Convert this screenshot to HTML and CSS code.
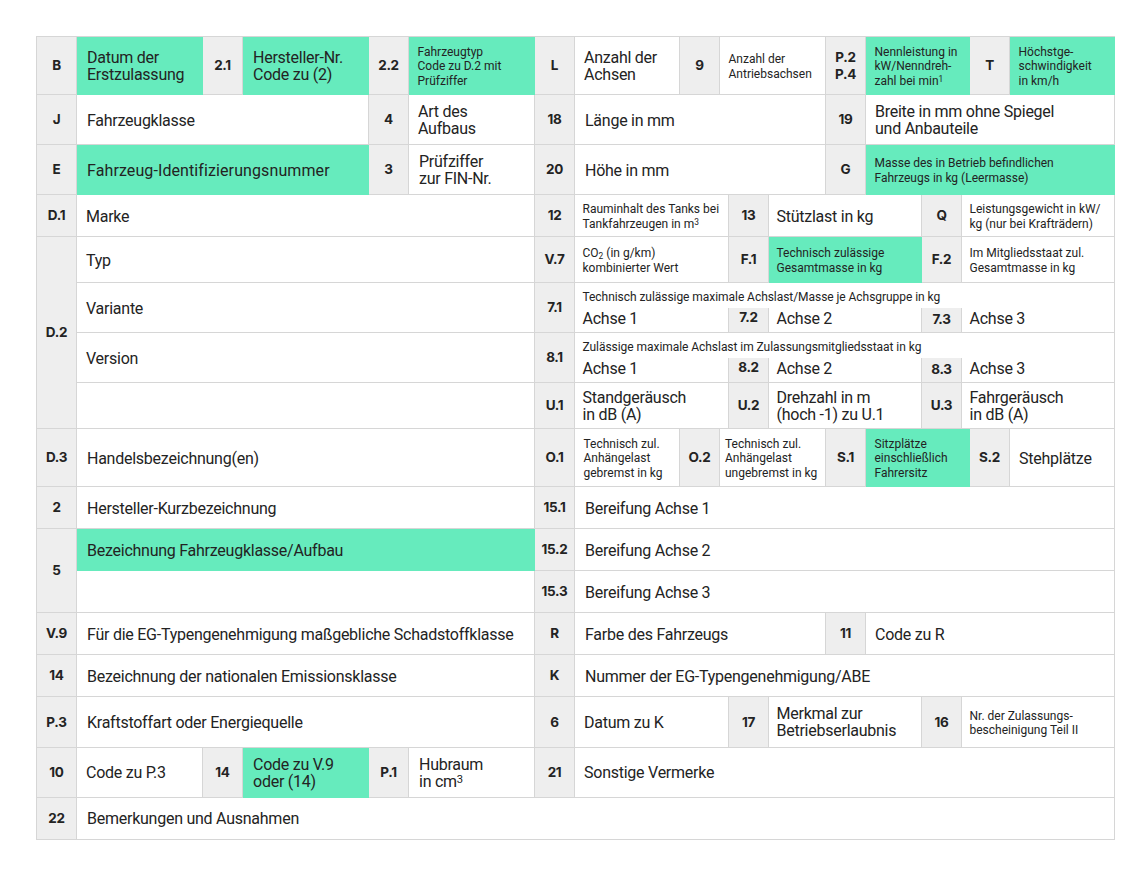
FILE: index.html
```html
<!DOCTYPE html>
<html lang="de">
<head>
<meta charset="utf-8">
<title>Zulassungsbescheinigung Teil I</title>
<link rel="stylesheet" href="styles.css">
</head>
<body>
<div class="sheet">
  <div class="key">B</div><div class="val hi">Datum der<br>Erstzulassung</div><div class="key">2.1</div><div class="val hi">Hersteller-Nr.<br>Code zu (2)</div><div class="key">2.2</div><div class="val hi small">Fahrzeugtyp<br>Code zu D.2 mit<br>Prüfziffer</div>
  <div class="key">L</div><div class="val snug">Anzahl der<br>Achsen</div><div class="key">9</div><div class="val small span-3">Anzahl der<br>Antriebsachsen</div><div class="key">P.2<br>P.4</div><div class="val hi small span-3"><span>Nennleistung in<br>kW/Nenndreh-<br>zahl bei min<sup>1</sup></span></div><div class="key">T</div><div class="val hi small">Höchstge-<br>schwindigkeit<br>in km/h</div>

  <div class="key">J</div><div class="val span-3 low">Fahrzeugklasse</div><div class="key">4</div><div class="val snug">Art des<br>Aufbaus</div>
  <div class="key">18</div><div class="val span-5 low">Länge in mm</div><div class="key">19</div><div class="val span-5 snug">Breite in mm ohne Spiegel<br>und Anbauteile</div>

  <div class="key">E</div><div class="val hi span-3 low wide">Fahrzeug-Identifizierungsnummer</div><div class="key">3</div><div class="val">Prüfziffer<br>zur FIN-Nr.</div>
  <div class="key">20</div><div class="val span-5 low">Höhe in mm</div><div class="key">G</div><div class="val hi small span-5">Masse des in Betrieb befindlichen<br>Fahrzeugs in kg (Leermasse)</div>

  <div class="key">D.1</div><div class="val span-5 snug low">Marke</div>
  <div class="key">12</div><div class="val small span-3 tight"><span>Rauminhalt des Tanks bei<br>Tankfahrzeugen in m<sup>3</sup></span></div><div class="key">13</div><div class="val span-3 tight low">Stützlast in kg</div><div class="key">Q</div><div class="val small span-3 tight">Leistungsgewicht in kW/<br>kg (nur bei Krafträdern)</div>

  <div class="key rows-6">D.2</div><div class="val span-5 snug low">Typ</div>
  <div class="key">V.7</div><div class="val small span-3 tight"><span>CO<sub>2</sub> (in g/km)<br>kombinierter Wert</span></div><div class="key">F.1</div><div class="val hi small span-3 tight">Technisch zulässige<br>Gesamtmasse in kg</div><div class="key">F.2</div><div class="val small span-3 tight">Im Mitgliedsstaat zul.<br>Gesamtmasse in kg</div>

  <div class="val span-5 rows-2 snug low">Variante</div>
  <div class="key rows-2">7.1</div><div class="val small span-11 tight open">Technisch zulässige maximale Achslast/Masse je Achsgruppe in kg</div>
  <div class="val span-3 tight axis">Achse 1</div><div class="key raised">7.2</div><div class="val span-3 tight axis">Achse 2</div><div class="key lifted">7.3</div><div class="val span-3 tight axis">Achse 3</div>

  <div class="val span-5 rows-2 snug low">Version</div>
  <div class="key rows-2">8.1</div><div class="val small span-11 tight open">Zulässige maximale Achslast im Zulassungsmitgliedsstaat in kg</div>
  <div class="val span-3 tight axis">Achse 1</div><div class="key raised">8.2</div><div class="val span-3 tight axis">Achse 2</div><div class="key lifted">8.3</div><div class="val span-3 tight axis">Achse 3</div>

  <div class="val span-5"></div>
  <div class="key">U.1</div><div class="val span-3 tight">Standgeräusch<br>in dB (A)</div><div class="key">U.2</div><div class="val span-3 tight">Drehzahl in m<br>(hoch -1) zu U.1</div><div class="key">U.3</div><div class="val span-3 tight">Fahrgeräusch<br>in dB (A)</div>

  <div class="key">D.3</div><div class="val span-5 low">Handelsbezeichnung(en)</div>
  <div class="key">O.1</div><div class="val small">Technisch zul.<br>Anhängelast<br>gebremst in kg</div><div class="key">O.2</div><div class="val small span-3 tighter">Technisch zul.<br>Anhängelast<br>ungebremst in kg</div><div class="key">S.1</div><div class="val hi small span-3">Sitzplätze<br>einschließlich<br>Fahrersitz</div><div class="key">S.2</div><div class="val snug low">Stehplätze</div>

  <div class="key">2</div><div class="val span-5 low">Hersteller-Kurzbezeichnung</div>
  <div class="key">15.1</div><div class="val span-11 low">Bereifung Achse 1</div>

  <div class="key rows-2">5</div><div class="val hi span-5 low">Bezeichnung Fahrzeugklasse/Aufbau</div>
  <div class="key">15.2</div><div class="val span-11 low">Bereifung Achse 2</div>
  <div class="val span-5"></div>
  <div class="key">15.3</div><div class="val span-11 low">Bereifung Achse 3</div>

  <div class="key">V.9</div><div class="val span-5 low">Für die EG-Typengenehmigung maßgebliche Schadstoffklasse</div>
  <div class="key">R</div><div class="val span-5 low">Farbe des Fahrzeugs</div><div class="key">11</div><div class="val span-5 snug low">Code zu R</div>

  <div class="key">14</div><div class="val span-5 low">Bezeichnung der nationalen Emissionsklasse</div>
  <div class="key">K</div><div class="val span-11 low">Nummer der EG-Typengenehmigung/ABE</div>

  <div class="key">P.3</div><div class="val span-5">Kraftstoffart oder Energiequelle</div>
  <div class="key">6</div><div class="val span-3 snug">Datum zu K</div><div class="key">17</div><div class="val span-3 tight">Merkmal zur<br>Betriebserlaubnis</div><div class="key">16</div><div class="val small span-3 tight">Nr. der Zulassungs-<br>bescheinigung Teil II</div>

  <div class="key">10</div><div class="val snug">Code zu P.3</div><div class="key">14</div><div class="val hi">Code zu V.9<br>oder (14)</div><div class="key">P.1</div><div class="val"><span>Hubraum<br>in cm<sup>3</sup></span></div>
  <div class="key">21</div><div class="val span-11 snug">Sonstige Vermerke</div>

  <div class="key">22</div><div class="val span-17">Bemerkungen und Ausnahmen</div>
</div>
</body>
</html>
```
FILE: styles.css
```css
html, body {
  margin: 0;
  background: #fff;
}

body {
  padding: 36px 33px 36px 36px;
  font-family: Roboto, "Liberation Sans", sans-serif;
  color: #232323;
}

.sheet {
  display: grid;
  width: 1079px;
  box-sizing: border-box;
  border-left: 1px solid #d6d6d6;
  border-top: 1px solid #d6d6d6;
  grid-template-columns: 40px 126px 40px 126px 40px 126px 40px 105px 40px 9px 40px 57px 40px 56px 40px 8px 40px 105px;
  grid-template-rows: 58px 50px 50px 42px 46px 25px 25px 25px 25px 46px 58px 42px 42px 42px 42px 42px 51px 50px 42px;
}

.key,
.val {
  display: flex;
  align-items: center;
  box-sizing: border-box;
  border-right: 1px solid #d6d6d6;
  border-bottom: 1px solid #d6d6d6;
}

.key {
  justify-content: center;
  text-align: center;
  background: #eeeeee;
  font-family: Inter, "Liberation Sans", sans-serif;
  font-weight: 700;
  font-size: 13.5px;
  line-height: 17px;
  letter-spacing: -0.3px;
}

.val {
  padding-left: 10px;
  font-size: 16px;
  line-height: 17px;
  letter-spacing: -0.25px;
  white-space: nowrap;
}

.small {
  padding-top: 2px;
  padding-left: 8.5px;
  font-size: 12px;
  line-height: 14.5px;
  letter-spacing: 0;
}

.hi {
  background: #66ebbd;
  border-color: #66ebbd;
}

.snug { padding-left: 9px; }
.tight { padding-left: 7.5px; }
.tighter { padding-left: 5px; }
.low { padding-top: 2px; }
.wide { letter-spacing: 0.1px; }
.axis { padding-bottom: 4px; }

.open {
  border-bottom: 0;
  padding-top: 4px;
  letter-spacing: -0.05px;
}

.raised { padding-bottom: 5px; }
.lifted { padding-bottom: 2px; }

.span-3 { grid-column: span 3; }
.span-5 { grid-column: span 5; }
.span-11 { grid-column: span 11; }
.span-17 { grid-column: span 17; }
.rows-2 { grid-row: span 2; }
.rows-6 { grid-row: span 6; }

sup, sub {
  font-size: 0.7em;
  line-height: 0;
}

sup { vertical-align: 0.35em; }
sub { vertical-align: -0.2em; }
```
